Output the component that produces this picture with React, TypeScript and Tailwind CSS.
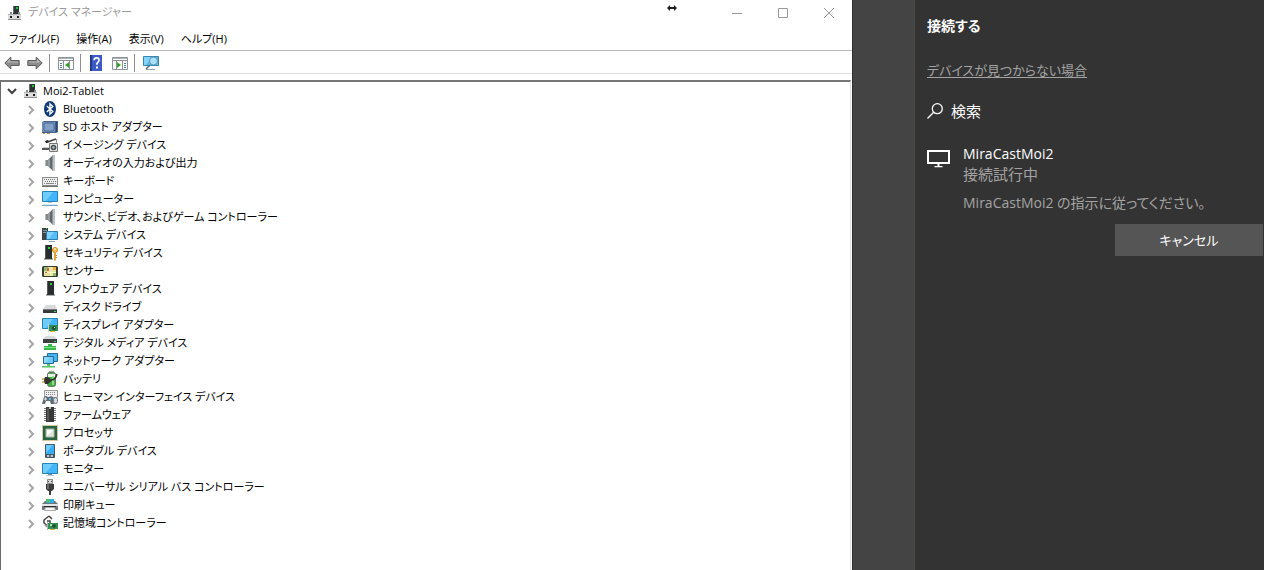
import type { ReactNode } from "react";
import clsx from "clsx";

interface IconProps {
  children: ReactNode;
  className?: string;
}

const Icon = ({ children, className }: IconProps) => (
  <svg
    viewBox="0 0 16 16"
    className={clsx("size-4 shrink-0", className)}
    aria-hidden="true"
  >
    {children}
  </svg>
);

const MachineIcon = () => (
  <Icon>
    <path d="M6 1h6v8H6z" fill="#2e3436" />
    <path d="M6 1h1v7H6z" fill="#6a7073" />
    <path d="M9 2h2v2H9z" fill="#19c832" />
    <path d="M3 7h2v2H3zM11 7h2v2h-2z" fill="#8b8b8b" />
    <path d="M1 9h13v6H1z" fill="#dcdcdc" />
    <path d="M1 9h13v1H1z" fill="#b2b2b2" />
    <path d="M1 14h13v1H1z" fill="#8f8f8f" />
    <path d="M3 11h2v2H3zM10 11h2v2h-2z" fill="#1c1c1c" />
  </Icon>
);

const BluetoothIcon = () => (
  <Icon>
    <ellipse cx="8" cy="8" rx="6" ry="8" fill="#0f3a78" />
    <path
      d="M4.8 5l6 5.6L8 13.2V2.8l2.8 2.6-6 5.6"
      fill="none"
      stroke="#fff"
      strokeWidth="1.4"
    />
  </Icon>
);

const SdHostIcon = () => (
  <Icon>
    <path d="M0 3l2-1h14v11l-2 1H0z" fill="#44628e" />
    <path d="M0 3h13v10H0z" fill="#7190b9" />
    <path d="M3 4h8l1 1v6l-1 1H3l-1-1V5z" fill="#829fc7" stroke="#4d6b98" />
    <path d="M14 3h1v10h-1z" fill="#2d466d" />
    <path d="M1 14h2v1H1zM5 14h3v1H5z" fill="#b59b4a" />
  </Icon>
);

const ImagingIcon = () => (
  <Icon>
    <path d="M4 5.5L14 2" stroke="#444" strokeWidth="1.6" />
    <path d="M3 4l3-1 1 2-3 1z" fill="#222" />
    <path d="M14.5 2v5" stroke="#999" />
    <path d="M0 11h8v2H0z" fill="#555" />
    <path d="M1 10h7v1H1z" fill="#ccc" />
    <path d="M7.5 6.5h8v8h-8z" fill="#e2e2e2" stroke="#777" />
    <circle cx="11.5" cy="10.5" r="2.8" fill="#4b4b4b" />
    <circle cx="11.5" cy="10.5" r="1.2" fill="#9ecbd6" />
  </Icon>
);

const SpeakerIcon = () => (
  <Icon>
    <path d="M3 5h3v6H3z" fill="#83898d" />
    <path d="M3 5h1v6H3z" fill="#b5babd" />
    <path d="M6 5l5-5v16l-5-5z" fill="#62686c" />
    <path d="M6 5l2-2v10l-2-2z" fill="#969ca0" />
    <path d="M10 1h1v14h-1z" fill="#8b9195" />
    <path d="M11 0h2v16h-2z" fill="#bfc3c6" />
  </Icon>
);

const KeyboardIcon = () => (
  <Icon>
    <path d="M.5 4.5h15v8H.5z" fill="#ededed" stroke="#8d8d8d" />
    <path d="M0 13h16v1H0z" fill="#707070" />
    <path d="M2 6.5h12M3 8.5h11" stroke="#777" strokeDasharray="1 1" />
    <path d="M2 10.5h1M4 10.5h8M13 10.5h1" stroke="#888" />
  </Icon>
);

const ScreenShape = () => (
  <>
    <path d="M.5 2.5h15v10H.5z" fill="#42b6f8" stroke="#2283bd" />
    <path d="M1 3h10l-7 9H1z" fill="#70cbff" />
  </>
);

const ComputerIcon = () => (
  <Icon>
    <g transform="translate(0 -2)">
      <ScreenShape />
    </g>
    <path d="M6 11h4v1H6z" fill="#b5c4cc" />
    <path d="M1 13h14v1H1z" fill="#d7e8f1" />
    <path d="M0 14h16v1H0z" fill="#75a9c8" />
  </Icon>
);

const SystemIcon = () => (
  <Icon>
    <path d="M0 1h6v12H0z" fill="#3e4448" />
    <path d="M1 3h4v1H1zM1 5h4v1H1z" fill="#8c979d" />
    <path d="M4 1h1v1H4z" fill="#31db47" />
    <path d="M4.5 4.5h11v8h-11z" fill="#55bdf8" stroke="#2e7fae" />
    <path d="M5 5h7l-5 7H5z" fill="#83d3ff" />
    <path d="M7 14h6v1H7z" fill="#8eaebe" />
  </Icon>
);

const TowerShape = () => (
  <>
    <path d="M5 0h7v13H5z" fill="#292d2f" />
    <path d="M5 0h1v13H5z" fill="#565b5e" />
    <path d="M8 2h2v2H8z" fill="#20d33c" />
    <path d="M4 13h9v2H4z" fill="#a8adb0" />
    <path d="M5 13h7v1H5z" fill="#33383b" />
  </>
);

const SecurityIcon = () => (
  <Icon>
    <g transform="translate(-2 0)">
      <TowerShape />
    </g>
    <circle cx="13" cy="5" r="2.5" fill="#f3c34e" stroke="#c68a22" />
    <circle cx="13" cy="4" r=".8" fill="#fff" />
    <path d="M12 7h2v8l-1 1-1-1z" fill="#e0a233" />
    <path d="M14 10h1v1h-1zM14 12h1v1h-1z" fill="#c68a22" />
  </Icon>
);

const SensorIcon = () => (
  <Icon>
    <rect y="3" width="16" height="11" rx="1.5" fill="#393c31" />
    <path d="M2 4h12v9H2z" fill="#e6df9d" />
    <path d="M2 4h4v4H2zM11 9h3v4h-3z" fill="#88bd73" />
    <path d="M9 4v9M2 9.5h12" stroke="#fff8c9" />
    <path d="M5 5h2v3H5zM3 9h2v1H3z" fill="#e2634b" />
    <path d="M11 4h3v3h-3z" fill="#efb33e" />
  </Icon>
);

const SoftwareIcon = () => (
  <Icon>
    <TowerShape />
  </Icon>
);

const DriveIcon = () => (
  <Icon>
    <path d="M4 6h9l2 4H1z" fill="#d9dadb" />
    <path d="M1 10h14v4H1z" fill="#36393b" />
    <path d="M1 10h14v1H1z" fill="#777b7d" />
    <path d="M12 12h2v1h-2z" fill="#31e04b" />
  </Icon>
);

const DisplayAdapterIcon = () => (
  <Icon>
    <g transform="translate(0 -1)">
      <ScreenShape />
    </g>
    <path d="M7 8h9v6H7z" fill="#2f8f58" />
    <path d="M6 7h1v8H6z" fill="#cbd1cc" />
    <circle cx="12" cy="11" r="2" fill="#1f4d36" />
    <path d="M12 10h1v1h-1z" fill="#b5e5ba" />
    <path d="M8 14h5v1H8z" fill="#f0b32e" />
  </Icon>
);

const DigitalMediaIcon = () => (
  <Icon>
    <path d="M4 1h8l3 3H1z" fill="#d9dadb" />
    <path d="M1 4h14v4H1z" fill="#3d4042" />
    <path d="M12 6h2v1h-2z" fill="#31e04b" />
    <path d="M6 9h4v2h4v4H2v-4h4z" fill="#34b84a" />
    <path d="M2 12h12v1H2z" fill="#84df87" />
  </Icon>
);

const NetworkIcon = () => (
  <Icon>
    <path d="M5.5 .5h10v8h-10z" fill="#46b6f3" stroke="#226b9c" />
    <path d="M1.5 3.5h10v7h-10z" fill="#6bc9fb" stroke="#226b9c" />
    <path d="M2 4h6l-4 6H2z" fill="#8ed9ff" />
    <path d="M5 11h3v2h5v2H0v-2h5z" fill="#56c963" />
    <path d="M0 14h13v1H0z" fill="#a8dcb0" />
  </Icon>
);

const BatteryIcon = () => (
  <Icon>
    <path d="M7 0h5v2H7z" fill="#a4a9ac" />
    <rect
      x="5.5"
      y="1.5"
      width="8"
      height="14"
      rx="2"
      fill="#3fae43"
      stroke="#67736b"
    />
    <path d="M6 3h7v3H6z" fill="#e5f2e5" />
    <path d="M10 5h2v9h-2z" fill="#8de184" />
    <path d="M0 8h3M0 11h3" stroke="#d1a33c" strokeWidth="1.5" />
    <path d="M3 6h3l4 3.5L6 13H3L2 9.5z" fill="#333" />
    <path d="M9 9c3 0 5-1 6-6" fill="none" stroke="#333" strokeWidth="1.4" />
  </Icon>
);

const HidIcon = () => (
  <Icon>
    <path d="M2.5 1.5h13v7h-13z" fill="#eee" stroke="#999" />
    <path d="M4 3.5h10M4 5.5h10" stroke="#888" strokeDasharray="1 1" />
    <path
      d="M0 15l2-7 2-1 2 1h1l2-1 2 1 1 7H9l-1-3H4l-1 3z"
      fill="#5f6d79"
    />
    <path d="M2 10h3M3.5 8.5v3" stroke="#e1e6ea" />
    <rect
      x="11.5"
      y="8.5"
      width="4"
      height="6"
      rx="2"
      fill="#d7dbdf"
      stroke="#66717a"
    />
    <path d="M7 9h2v2H7z" fill="#65aede" />
  </Icon>
);

const FirmwareIcon = () => (
  <Icon>
    <path
      d="M3 1v14M13 1v14"
      stroke="#777"
      strokeWidth="2"
      strokeDasharray="1 1"
    />
    <path d="M4 0h8v15H4z" fill="#373737" />
    <path d="M5 1h2v13H5z" fill="#565656" />
    <path d="M7 0h2v2H7z" fill="#bbb" />
  </Icon>
);

const ProcessorIcon = () => (
  <Icon>
    <path
      d="M.5 .5h15v15H.5z"
      fill="none"
      stroke="#ad913c"
      strokeDasharray="1 1"
    />
    <path d="M1 1h14v14H1z" fill="#286344" />
    <path d="M4 4h8v8H4z" fill="#e3e4dc" stroke="#b1bcae" />
    <path d="M5 5h6l-6 6z" fill="#fff" />
  </Icon>
);

const PortableIcon = () => (
  <Icon>
    <rect x="3" y="1" width="10" height="14" rx="1" fill="#495761" />
    <path d="M4 2h8v9H4z" fill="#35aef4" />
    <path d="M4 2h7l-7 8z" fill="#71cbff" />
    <path d="M5 12h6v2H5z" fill="#bac3c8" />
    <path d="M7 12h2v2H7z" fill="#697983" />
  </Icon>
);

const MonitorIcon = () => (
  <Icon>
    <ScreenShape />
    <path d="M6 13h4v1H6z" fill="#7c929e" />
    <path d="M4 14h8v1H4z" fill="#b4ccd7" />
  </Icon>
);

const UsbIcon = () => (
  <Icon>
    <path d="M5.5 .5h5v4h-5z" fill="#d7d7d7" stroke="#888" />
    <path d="M6 2h1v1H6zM9 2h1v1H9z" fill="#444" />
    <path d="M4 5h8v5l-2 2H6l-2-2z" fill="#3b3b3b" />
    <path d="M5 5h2v5H5z" fill="#686868" />
    <path d="M7 12h2v4H7z" fill="#3b3b3b" />
  </Icon>
);

const PrinterIcon = () => (
  <Icon>
    <path d="M4 2h8v4H4z" fill="#31aee0" />
    <path d="M6 2h3v3H6z" fill="#50c464" />
    <path d="M3 4h10l3 3v6H0V7z" fill="#70777b" />
    <path d="M4 2h8v4H4z" fill="#31aee0" />
    <path d="M4 2h4v3H4z" fill="#50c464" />
    <path d="M0 7h16v2H0z" fill="#e4e5e6" />
    <path d="M2 9h12v1H2z" fill="#292d2f" />
    <path d="M3.5 10.5h9l1 3h-11z" fill="#f8f8f8" stroke="#aaa" />
  </Icon>
);

const StorageIcon = () => (
  <Icon>
    <path
      d="M7 1L2 5v3l5 4M7 1l3 3M5 6h3v3"
      fill="none"
      stroke="#444"
      strokeWidth="1.5"
    />
    <path d="M3 10l4 3" stroke="#999" strokeWidth="2" />
    <path d="M6 8h10v6H6z" fill="#348f55" />
    <path d="M5 7h1v8H5z" fill="#b5b5b5" />
    <circle cx="12" cy="11" r="1.8" fill="#1d4c31" />
    <path d="M8 9h2v2H8z" fill="#a6dfae" />
    <path d="M8 14h5v1H8z" fill="#edb432" />
  </Icon>
);

const ArrowIcon = ({ flip }: { flip?: boolean }) => (
  <Icon className={clsx(flip && "-scale-x-100")}>
    <path
      d="M.8 8l6-6v3.5h8.4v5H6.8V14z"
      fill="#8c8c8c"
      stroke="#5c5c5c"
      strokeLinejoin="round"
    />
    <path d="M2.5 7.5L6 4v2.5h8v1z" fill="#b8b8b8" />
  </Icon>
);

const PaneIcon = ({ flip }: { flip?: boolean }) => (
  <Icon>
    <path d="M.5 2.5h15v12H.5z" fill="#fff" stroke="#8b9298" />
    <path d="M1 3h14v1H1z" fill="#adb4b9" />
    <path d="M1 5.5h14" stroke="#8b9298" />
    <g transform={flip ? "matrix(-1 0 0 1 16 0)" : undefined}>
      <path d="M5.5 6v8M11.5 6v8" stroke="#8b9298" />
      <path d="M2 8.5h2M2 10.5h2M2 12.5h2" stroke="#4b80b5" />
      <path d="M11 7v6l-4-3z" fill="#36a322" />
    </g>
  </Icon>
);

const HelpIcon = () => (
  <Icon>
    <path d="M2 0h12v16H2z" fill="#3c5cc4" />
    <path d="M2 0h2v16H2z" fill="#213b8c" />
    <path
      d="M6.2 5.2c0-3 4.8-3 4.8 0 0 2-2.2 2-2.2 4.6"
      fill="none"
      stroke="#fff"
      strokeWidth="1.7"
    />
    <path d="M8 11.5h2v2H8z" fill="#fff" />
  </Icon>
);

const ScanIcon = () => (
  <Icon>
    <path d="M.5 1.5h15v9H.5z" fill="#58b9e9" stroke="#3586ae" />
    <path d="M1 2h8l-6 8H1z" fill="#83d4f8" />
    <path d="M3 14h9v1H3z" fill="#8ba7b5" />
    <path d="M7 10l-4 4" stroke="#537284" strokeWidth="1.6" />
    <circle cx="10.5" cy="6" r="4" fill="#a9e1f8" stroke="#5d98b5" />
  </Icon>
);

const devices: { label: string; icon: ReactNode }[] = [
  { label: "Bluetooth", icon: <BluetoothIcon /> },
  { label: "SD ホスト アダプター", icon: <SdHostIcon /> },
  { label: "イメージング デバイス", icon: <ImagingIcon /> },
  { label: "オーディオの入力および出力", icon: <SpeakerIcon /> },
  { label: "キーボード", icon: <KeyboardIcon /> },
  { label: "コンピューター", icon: <ComputerIcon /> },
  {
    label: "サウンド、ビデオ、およびゲーム コントローラー",
    icon: <SpeakerIcon />,
  },
  { label: "システム デバイス", icon: <SystemIcon /> },
  { label: "セキュリティ デバイス", icon: <SecurityIcon /> },
  { label: "センサー", icon: <SensorIcon /> },
  { label: "ソフトウェア デバイス", icon: <SoftwareIcon /> },
  { label: "ディスク ドライブ", icon: <DriveIcon /> },
  { label: "ディスプレイ アダプター", icon: <DisplayAdapterIcon /> },
  { label: "デジタル メディア デバイス", icon: <DigitalMediaIcon /> },
  { label: "ネットワーク アダプター", icon: <NetworkIcon /> },
  { label: "バッテリ", icon: <BatteryIcon /> },
  { label: "ヒューマン インターフェイス デバイス", icon: <HidIcon /> },
  { label: "ファームウェア", icon: <FirmwareIcon /> },
  { label: "プロセッサ", icon: <ProcessorIcon /> },
  { label: "ポータブル デバイス", icon: <PortableIcon /> },
  { label: "モニター", icon: <MonitorIcon /> },
  { label: "ユニバーサル シリアル バス コントローラー", icon: <UsbIcon /> },
  { label: "印刷キュー", icon: <PrinterIcon /> },
  { label: "記憶域コントローラー", icon: <StorageIcon /> },
];

const menus = ["ファイル(F)", "操作(A)", "表示(V)", "ヘルプ(H)"];

const Chevron = ({ open }: { open?: boolean }) => (
  <svg viewBox="0 0 10 10" className="size-[10px]" aria-hidden="true">
    <path
      d={open ? "M1 3l4 4 4-4" : "M3 1l4 4-4 4"}
      fill="none"
      stroke={open ? "#404040" : "#a6a6a6"}
      strokeWidth="2"
    />
  </svg>
);

const Separator = () => <span className="h-[18px] w-px bg-[#8d8d8d]" />;

const TitleBar = () => (
  <header className="relative flex h-[25px] items-center pl-[7px]">
    <MachineIcon />
    <h1 className="ml-[5px] text-[11px] text-[#999]">デバイス マネージャー</h1>
    <svg
      viewBox="0 0 10 6"
      className="absolute top-[5px] right-[175px] h-[6px] w-[10px]"
      aria-hidden="true"
    >
      <path d="M0 3l3-3v2h4V0l3 3-3 3V4H3v2z" fill="#1b1f22" />
    </svg>
    <div className="ml-auto flex h-full text-[#999]">
      {[
        { name: "Minimize", d: "M0 5.5h10" },
        { name: "Maximize", d: "M.5 .5h9v9h-9z" },
        { name: "Close", d: "M0 0l10 10M10 0L0 10" },
      ].map(({ name, d }) => (
        <button
          key={name}
          type="button"
          aria-label={name}
          className="flex w-[46px] items-center justify-center"
        >
          <svg viewBox="0 0 10 10" className="size-[10px]" aria-hidden="true">
            <path d={d} fill="none" stroke="currentColor" />
          </svg>
        </button>
      ))}
    </div>
  </header>
);

const Toolbar = () => (
  <div className="flex h-[24px] items-center border-y border-t-[#b8b8b8] border-b-[#dcdcdc] pt-[2px] pl-1">
    <div className="flex gap-[7px] pr-[6px]">
      <button type="button" aria-label="Back">
        <ArrowIcon />
      </button>
      <button type="button" aria-label="Forward">
        <ArrowIcon flip />
      </button>
    </div>
    <Separator />
    <button type="button" aria-label="Console tree" className="pr-[6px] pl-2">
      <PaneIcon />
    </button>
    <Separator />
    <div className="flex gap-2 pr-[6px] pl-[7px]">
      <button type="button" aria-label="Help">
        <HelpIcon />
      </button>
      <button type="button" aria-label="Action pane">
        <PaneIcon flip />
      </button>
    </div>
    <Separator />
    <button type="button" aria-label="Scan" className="pl-2">
      <ScanIcon />
    </button>
  </div>
);

const DeviceTree = () => (
  <div className="mt-[6px] mr-px flex-1 border-t-2 border-r border-l border-t-[#777] border-r-[#e3e3e3] border-l-[#696969] text-[11px]">
    <div className="flex h-[18px] items-center">
      <button type="button" aria-label="Collapse" className="ml-[6px]">
        <Chevron open />
      </button>
      <span className="ml-[6px] flex">
        <MachineIcon />
      </span>
      <span className="ml-1">Moi2-Tablet</span>
    </div>
    <ul>
      {devices.map(({ label, icon }) => (
        <li key={label} className="flex h-[18px] items-center">
          <button
            type="button"
            aria-label={`Expand ${label}`}
            className="ml-[25px] pt-[2px]"
          >
            <Chevron />
          </button>
          <span className="ml-[6px] flex">{icon}</span>
          <span className="ml-[5px] whitespace-nowrap">{label}</span>
        </li>
      ))}
    </ul>
  </div>
);

const DeviceManager = () => (
  <main className="flex min-w-0 flex-1 flex-col bg-white text-black">
    <TitleBar />
    <nav className="flex h-[25px] items-center gap-[17px] pt-[3px] pl-[9px] text-[11px]">
      {menus.map((menu) => (
        <button key={menu} type="button" className="whitespace-nowrap">
          {menu}
        </button>
      ))}
    </nav>
    <Toolbar />
    <DeviceTree />
  </main>
);

const ConnectPanel = () => (
  <aside className="w-[350px] shrink-0 border-l border-[#4d4c3c] bg-[#333] pt-4 pl-3 text-[14px] leading-5 text-white">
    <h2 className="font-bold">接続する</h2>
    <a
      href="#help"
      className="mt-6 inline-block text-[13px] text-[#a3a3a3] underline underline-offset-2"
    >
      デバイスが見つからない場合
    </a>
    <div className="mt-[21px] flex items-center gap-2">
      <svg viewBox="0 0 16 16" className="size-4" aria-hidden="true">
        <g fill="none" stroke="#fff" strokeWidth="1.3">
          <circle cx="10.3" cy="5.7" r="5" />
          <path d="M6.7 9.3L.5 15.5" />
        </g>
      </svg>
      <span className="text-[15px]">検索</span>
    </div>
    <section className="mt-[23px] flex gap-3">
      <svg
        viewBox="0 0 24 18"
        className="mt-[6px] h-[18px] w-6 shrink-0"
        aria-hidden="true"
      >
        <path d="M1 1h21v12H1z" fill="none" stroke="#fff" strokeWidth="2" />
        <path d="M10.5 13h2v3h3v1.3h-8V16h3z" fill="#fff" />
      </svg>
      <div>
        <h3>MiraCastMoi2</h3>
        <p className="text-[15px] text-[#a3a3a3]">接続試行中</p>
        <p className="mt-[9px] text-[#a3a3a3]">
          MiraCastMoi2 の指示に従ってください。
        </p>
      </div>
    </section>
    <div className="mt-[11px] flex justify-end pr-px">
      <button type="button" className="h-8 w-[148px] bg-[#555] text-[13px]">
        キャンセル
      </button>
    </div>
  </aside>
);

export default function App() {
  return (
    <div
      lang="ja"
      className="flex min-h-screen font-['Open_Sans','Noto_Sans_CJK_JP',sans-serif] [font-feature-settings:'palt']"
    >
      <DeviceManager />
      <div className="w-[62px] shrink-0 border-l border-[#2f2f2f] bg-[#444]" />
      <ConnectPanel />
    </div>
  );
}
